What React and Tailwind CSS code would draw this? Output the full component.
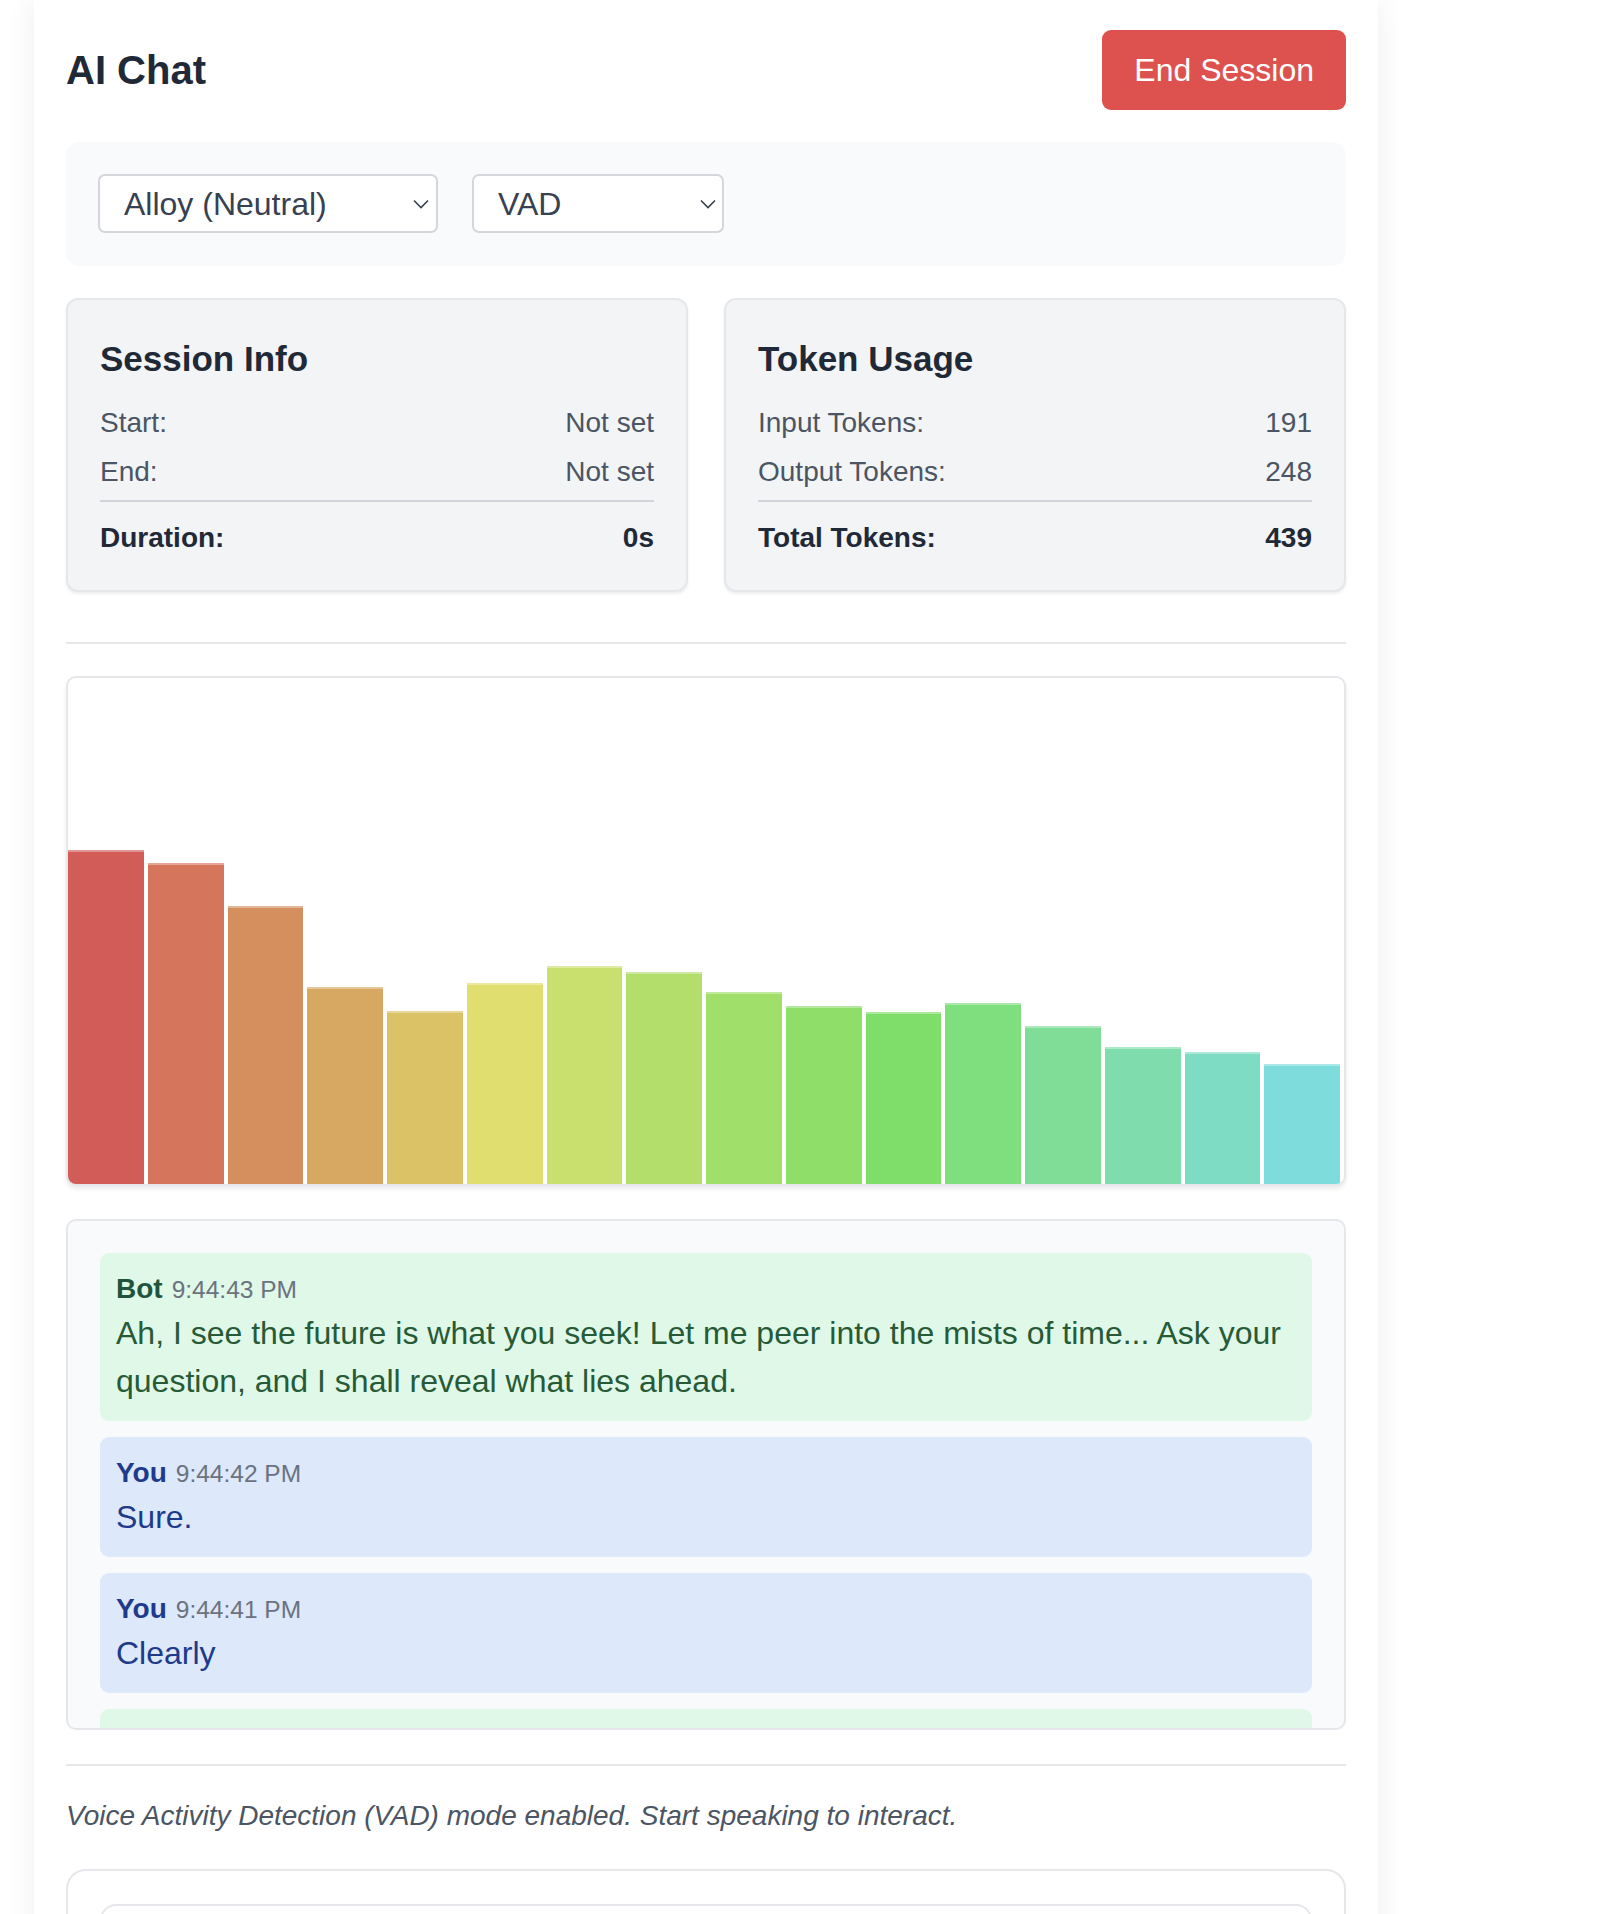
import React from 'react';

const bars = [
  { h: 334, c: '#d15c58' },
  { h: 321, c: '#d4755c' },
  { h: 278, c: '#d58f5e' },
  { h: 197, c: '#d7a862' },
  { h: 173, c: '#dbc266' },
  { h: 201, c: '#e0de6e' },
  { h: 218, c: '#cae06e' },
  { h: 212, c: '#b3de6c' },
  { h: 192, c: '#a0df6a' },
  { h: 178, c: '#8ede69' },
  { h: 172, c: '#7ede69' },
  { h: 181, c: '#7fde7e' },
  { h: 158, c: '#7fdd98' },
  { h: 137, c: '#7fddad' },
  { h: 132, c: '#7fdcc4' },
  { h: 120, c: '#7fdcdc' },
];

const messages = [
  {
    who: 'Bot',
    time: '9:44:43 PM',
    text: 'Ah, I see the future is what you seek! Let me peer into the mists of time... Ask your question, and I shall reveal what lies ahead.',
  },
  { who: 'You', time: '9:44:42 PM', text: 'Sure.' },
  { who: 'You', time: '9:44:41 PM', text: 'Clearly' },
];

const Select = ({ value, width, chevronRight }) => (
  <div className={`relative ${width}`}>
    <select
      defaultValue={value}
      className="h-[59px] w-full appearance-none rounded-[7px] border-2 border-[#d4d6db] bg-white pl-[24px] text-[32px] text-[#374151] outline-none"
    >
      <option>{value}</option>
    </select>
    <svg
      width="18"
      height="10"
      viewBox="0 0 18 10"
      fill="none"
      className={`pointer-events-none absolute top-[25px] ${chevronRight}`}
    >
      <polyline points="2,1.5 9,8.5 16,1.5" stroke="#374151" strokeWidth="1.6" />
    </svg>
  </div>
);

const InfoCard = ({ title, rows, total }) => (
  <div className="rounded-[12px] border-2 border-[#e5e7eb] bg-[#f3f4f6] px-[32px] pt-[34px] pb-[31px] shadow-[0_2px_3px_rgba(0,0,0,0.07)]">
    <h2 className="text-[35px] font-bold leading-[49px] text-[#1f2937]">{title}</h2>
    <div className="mt-[19px] flex flex-col gap-[7px]">
      {rows.map(([label, value]) => (
        <div key={label} className="flex justify-between text-[28px] leading-[42px] text-[#4b5563]">
          <span>{label}</span>
          <span>{value}</span>
        </div>
      ))}
    </div>
    <div className="mt-[7px] flex justify-between border-t-2 border-[#d1d5db] pt-[15px] text-[28px] font-bold leading-[42px] text-[#1f2937]">
      <span>{total[0]}</span>
      <span>{total[1]}</span>
    </div>
  </div>
);

const Message = ({ who, time, text }) => {
  const bot = who === 'Bot';
  return (
    <div className={`rounded-[9px] px-[16px] pt-[16px] pb-[16px] ${bot ? 'bg-[#e0f8e7]' : 'bg-[#dde8fb]'}`}>
      <div className="text-[28px] leading-[40px]">
        <span className={`font-bold ${bot ? 'text-[#22543d]' : 'text-[#1e3a8a]'}`}>{who}</span>
        <span className="ml-[9px] text-[24.5px] leading-none text-[#6b7280]">{time}</span>
      </div>
      <p className={`text-[32px] leading-[48px] ${bot ? 'text-[#275a37]' : 'text-[#1e3a8a]'}`}>{text}</p>
    </div>
  );
};

export default function App() {
  return (
    <div className="min-h-screen bg-white font-['Liberation_Sans',Arial,sans-serif]">
      <div className="ml-[34px] w-[1344px] bg-white px-[32px] pt-[30px] pb-[60px] shadow-[0_0_28px_rgba(0,0,0,0.07)]">
        {/* Header */}
        <div className="flex h-[80px] items-center justify-between">
          <h1 className="text-[40px] font-bold text-[#1f2937]">AI Chat</h1>
          <button className="flex h-[80px] items-center rounded-[9px] bg-[#dd524e] px-[32px] text-[32px] text-white">
            End Session
          </button>
        </div>

        {/* Controls */}
        <div className="mt-[32px] flex gap-[34px] rounded-[14px] bg-[#f9fafb] px-[32px] pt-[32px] pb-[33px]">
          <Select value="Alloy (Neutral)" width="w-[340px]" chevronRight="right-[8px]" />
          <Select value="VAD" width="w-[252px]" chevronRight="right-[7px]" />
        </div>

        {/* Info cards */}
        <div className="mt-[32px] grid grid-cols-2 gap-[36px]">
          <InfoCard
            title="Session Info"
            rows={[
              ['Start:', 'Not set'],
              ['End:', 'Not set'],
            ]}
            total={['Duration:', '0s']}
          />
          <InfoCard
            title="Token Usage"
            rows={[
              ['Input Tokens:', '191'],
              ['Output Tokens:', '248'],
            ]}
            total={['Total Tokens:', '439']}
          />
        </div>

        <hr className="mt-[50px] border-t-2 border-[#e5e7eb]" />

        {/* Audio visualizer */}
        <div className="mt-[32px] h-[510px] overflow-hidden rounded-[10px] border-2 border-[#e5e7eb] bg-white shadow-[0_3px_4px_rgba(0,0,0,0.08)]">
          <div className="flex h-full items-end gap-[4px] pr-[4px]">
            {bars.map((b, i) => (
              <div
                key={i}
                className="flex-1 shadow-[inset_0_2px_0_rgba(255,255,255,0.35)]"
                style={{ height: b.h, backgroundColor: b.c }}
              />
            ))}
          </div>
        </div>

        {/* Chat log */}
        <div className="mt-[33px] h-[511px] overflow-hidden rounded-[10px] border-2 border-[#e5e7eb] bg-[#f9fafb] px-[32px] pt-[32px]">
          <div className="flex flex-col gap-[16px]">
            {messages.map((m, i) => (
              <Message key={i} {...m} />
            ))}
            {/* next message, scrolled out of view */}
            <div className="h-[120px] rounded-[9px] bg-[#e0f8e7]" />
          </div>
        </div>

        <hr className="mt-[34px] border-t-2 border-[#e5e7eb]" />

        <p className="mt-[29px] text-[28px] italic leading-[42px] text-[#4b5563]">
          Voice Activity Detection (VAD) mode enabled. Start speaking to interact.
        </p>

        {/* Input area */}
        <div className="mt-[32px] rounded-[20px] border-2 border-[#e5e7eb] bg-white px-[32px] pt-[33px] pb-[32px]">
          <div className="h-[140px] rounded-[16px] border-2 border-[#e5e7eb] bg-white" />
        </div>
      </div>
    </div>
  );
}
